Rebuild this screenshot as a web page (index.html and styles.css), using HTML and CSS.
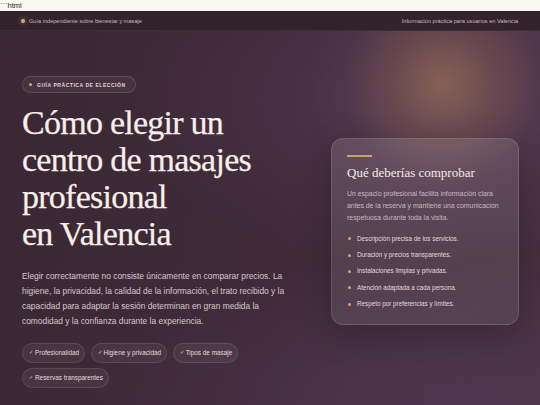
FILE: index.html
```
<!DOCTYPE html>
<html lang="es">
<head>
<meta charset="utf-8">
<title>Cómo elegir un centro de masajes profesional en Valencia</title>
<link rel="stylesheet" href="styles.css">
</head>
<body>
<div class="raw">&#96;&#96;&#96;html</div>
<header class="topbar">
  <div class="brand"><span class="dot"></span>Guía independiente sobre bienestar y masaje</div>
  <div class="note">Información práctica para usuarios en Valencia</div>
</header>
<main class="hero">
  <div class="hero-inner">
    <section class="intro">
      <div class="badge"><span class="dot"></span>GUÍA PRÁCTICA DE ELECCIÓN</div>
      <h1>Cómo elegir un<br>centro de masajes<br>profesional<br>en Valencia</h1>
      <p class="lead">Elegir correctamente no consiste únicamente en comparar precios. La higiene, la privacidad, la calidad de la información, el trato recibido y la capacidad para adaptar la sesión determinan en gran medida la comodidad y la confianza durante la experiencia.</p>
      <ul class="chips">
        <li><span class="tick">✓</span>Profesionalidad</li>
        <li><span class="tick">✓</span>Higiene y privacidad</li>
        <li><span class="tick">✓</span>Tipos de masaje</li>
        <li><span class="tick">✓</span>Reservas transparentes</li>
      </ul>
    </section>
    <aside class="card">
      <span class="rule"></span>
      <h2>Qué deberías comprobar</h2>
      <p>Un espacio profesional facilita información clara antes de la reserva y mantiene una comunicación respetuosa durante toda la visita.</p>
      <ul class="checks">
        <li>Descripción precisa de los servicios.</li>
        <li>Duración y precios transparentes.</li>
        <li>Instalaciones limpias y privadas.</li>
        <li>Atención adaptada a cada persona.</li>
        <li>Respeto por preferencias y límites.</li>
      </ul>
    </aside>
  </div>
</main>
</body>
</html>
```
FILE: styles.css
```
* { box-sizing: border-box; }

html, body {
  margin: 0;
  padding: 0;
}

body {
  font-family: "Liberation Sans", Arial, sans-serif;
  background: #fbf8f3;
  color: #222;
  overflow: hidden;
}

.raw {
  height: 11px;
  font-size: 7.5px;
  line-height: 11px;
  color: #222;
}

.topbar {
  height: 20px;
  display: flex;
  align-items: center;
  justify-content: space-between;
  padding: 0 22px 0 21px;
  background: #33232d;
  border-bottom: 1px solid rgba(255, 255, 255, 0.05);
  font-size: 5.6px;
  color: #c6b9c1;
}

.brand {
  display: flex;
  align-items: center;
  gap: 4px;
}

.brand .dot {
  width: 4px;
  height: 4px;
  border-radius: 50%;
  background: #d6a86c;
  box-shadow: 0 0 4px rgba(214, 168, 108, 0.7);
}

.hero {
  min-height: 374px;
  padding: 45px 21px 0 22px;
  background:
    radial-gradient(circle at 82% 14%, rgba(176, 128, 92, 0.58) 0, rgba(160, 112, 90, 0.32) 55px, rgba(120, 80, 100, 0.12) 100px, rgba(90, 60, 90, 0) 135px),
    radial-gradient(ellipse 60% 45% at 82% 18%, rgba(95, 65, 100, 0.45), rgba(95, 65, 100, 0) 100%),
    radial-gradient(ellipse 70% 40% at 85% 100%, rgba(90, 66, 100, 0.45), rgba(90, 66, 100, 0) 100%),
    linear-gradient(100deg, #3b2834 0%, #3e2a39 50%, #45303f 100%);
}

.hero-inner {
  display: grid;
  grid-template-columns: 1fr 188px;
  column-gap: 20px;
  align-items: center;
}

.badge {
  display: flex;
  width: max-content;
  align-items: center;
  gap: 5px;
  height: 17px;
  padding: 0 9px 0 6px;
  border-radius: 9px;
  border: 1px solid rgba(255, 255, 255, 0.12);
  background: rgba(255, 255, 255, 0.05);
  font-size: 5px;
  font-weight: 700;
  letter-spacing: 0.11em;
  color: #e2d3d9;
}

.badge .dot {
  width: 3px;
  height: 3px;
  border-radius: 50%;
  background: #d1a56c;
}

h1 {
  margin: 11px 0 0;
  font-family: "Liberation Serif", "Times New Roman", serif;
  font-weight: 400;
  font-size: 34px;
  line-height: 37px;
  letter-spacing: -0.022em;
  color: #f7eee8;
  -webkit-text-stroke: 0.25px #f7eee8;
}

.lead {
  max-width: 268px;
  margin: 16.5px 0 0;
  font-size: 8.4px;
  line-height: 15px;
  color: #d5c7ce;
}

.chips {
  list-style: none;
  margin: 14px 0 0;
  padding: 0;
  display: flex;
  flex-wrap: wrap;
  gap: 5px 5.5px;
}

.chips li {
  height: 20px;
  display: flex;
  align-items: center;
  padding: 0 5px 0 6px;
  border-radius: 10px;
  border: 1px solid rgba(255, 255, 255, 0.1);
  background: rgba(255, 255, 255, 0.06);
  font-size: 6.4px;
  color: #e4d9de;
}

.chips .tick {
  font-size: 4.5px;
  color: #e8d3ac;
  margin-right: 2px;
}

.card {
  padding: 16px 15px 15px;
  border-radius: 12px;
  border: 1px solid rgba(255, 255, 255, 0.12);
  background: linear-gradient(160deg, rgba(255, 255, 255, 0.13), rgba(255, 255, 255, 0.07));
  box-shadow: 0 10px 30px rgba(20, 8, 16, 0.25);
}

.rule {
  display: block;
  width: 25px;
  height: 2px;
  background: #c99f6b;
}

.card h2 {
  margin: 8px 0 0;
  font-family: "Liberation Serif", "Times New Roman", serif;
  font-weight: 400;
  font-size: 13px;
  line-height: 16px;
  color: #f4eae5;
}

.card p {
  margin: 6.4px 0 0;
  font-size: 6.9px;
  line-height: 12px;
  color: #c8b8c2;
}

.checks {
  list-style: none;
  margin: 10px 0 0;
  padding: 0;
  display: flex;
  flex-direction: column;
  gap: 6.4px;
}

.checks li {
  display: flex;
  align-items: center;
  gap: 6.5px;
  font-size: 6.3px;
  line-height: 10px;
  color: #e3d8de;
}

.checks li::before {
  content: "";
  width: 3px;
  height: 3px;
  border-radius: 50%;
  background: #d1a56c;
  flex: none;
  margin-left: 0.5px;
}
```
